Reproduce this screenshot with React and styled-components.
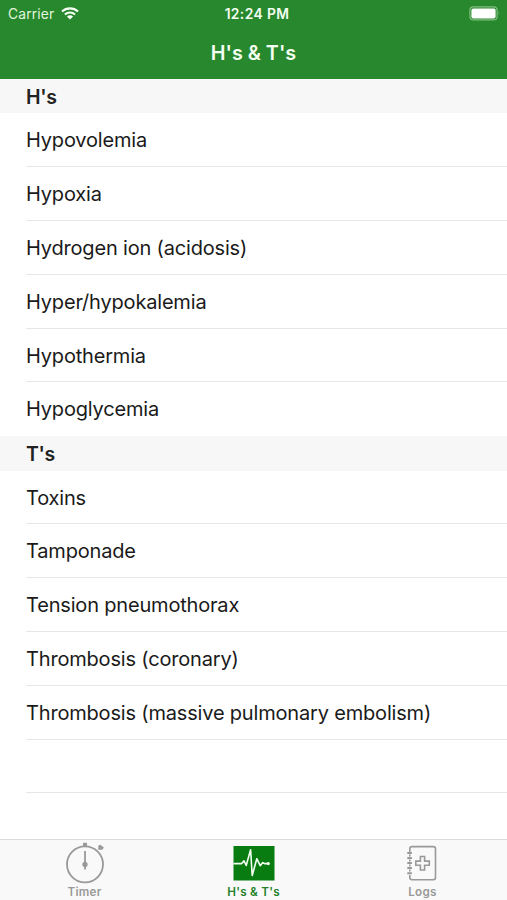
import React from "react";
import styled, { createGlobalStyle } from "styled-components";

const GlobalStyle = createGlobalStyle`
  * {
    box-sizing: border-box;
  }
  body {
    margin: 0;
    background: #fff;
    font-family: Inter, "Liberation Sans", sans-serif;
  }
`;

const Screen = styled.div`
  display: flex;
  flex-direction: column;
  width: 507px;
  height: 900px;
  overflow: hidden;
  background: #fff;
`;

const Header = styled.header`
  flex: none;
  height: 79px;
  background: #28882d;
  color: #f4fff2;
`;

const StatusBar = styled.div`
  display: grid;
  grid-template-columns: 1fr auto 1fr;
  align-items: center;
  height: 27px;
  padding: 0 6px 0 8px;
`;

const Carrier = styled.div`
  display: flex;
  align-items: center;
  gap: 7px;
  font-size: 13.8px;
  letter-spacing: 0.15px;
  color: #e0f6dd;
`;

const Clock = styled.div`
  margin-left: 5px;
  font-size: 13.8px;
  font-weight: 600;
  letter-spacing: 0.4px;
`;

const Battery = styled.svg`
  justify-self: end;
`;

const Title = styled.h1`
  margin: 0;
  height: 52px;
  line-height: 52px;
  text-align: center;
  font-size: 19.8px;
  font-weight: 600;
`;

const List = styled.main`
  flex: 1;
  min-height: 0;
  overflow: hidden;
`;

const SectionTitle = styled.h2`
  margin: 0;
  height: 34.4px;
  padding-left: 26px;
  background: #f7f7f7;
  color: #222;
  font-size: 19.5px;
  font-weight: 600;
  letter-spacing: -0.3px;
  line-height: 37px;
`;

const Row = styled.div`
  height: 53.8px;
  margin-left: 26px;
  border-bottom: 1px solid ${(props) => (props.$last ? "transparent" : "#e6e6e6")};
  color: #1a1a1a;
  font-size: 20px;
  letter-spacing: -0.18px;
  line-height: 55px;
  white-space: nowrap;
`;

const TabBar = styled.nav`
  flex: none;
  display: grid;
  grid-template-columns: repeat(3, 1fr);
  height: 61px;
  border-top: 1px solid #dcdcdc;
  background: #f9f9f9;
`;

const Tab = styled.div`
  display: flex;
  flex-direction: column;
  align-items: center;
  padding-top: 1px;
  color: ${(props) => (props.$active ? "#23812a" : "#999")};
  font-size: 11.7px;
  font-weight: 600;
  letter-spacing: 0.25px;
  line-height: 14px;

  & svg {
    display: block;
  }
`;

function WifiIcon() {
  return (
    <svg width="18" height="13" viewBox="0 0 18 13">
      <g fill="none" stroke="#f8fff6" strokeWidth="2.1">
        <path d="M1 4.5 C5.5 .3 12.5 .3 17 4.5" />
        <path d="M3.9 7.5 C6.8 4.8 11.2 4.8 14.1 7.5" />
      </g>
      <path d="M5.9 9.5 C7.7 7.9 10.3 7.9 12.1 9.5 L9 12.6 Z" fill="#f8fff6" />
    </svg>
  );
}

function BatteryIcon() {
  return (
    <Battery width="32" height="15" viewBox="0 0 32 15">
      <rect x="0.9" y="0.9" width="27.2" height="13" rx="3.5" fill="none" stroke="#80bd80" strokeWidth="1.2" />
      <rect x="2.4" y="2.4" width="24.2" height="10" rx="2" fill="#fff" />
      <path d="M29.7 5.3 Q31.5 7.4 29.7 9.5 Z" fill="#80bd80" />
    </Battery>
  );
}

function TimerIcon() {
  return (
    <svg width="44" height="44" viewBox="0 0 44 44">
      <g fill="none" stroke="#999" strokeWidth="1.8">
        <circle cx="22" cy="23.3" r="18" />
        <path d="M22 10 V28.5" />
      </g>
      <g fill="#999">
        <rect x="20" y="1.8" width="4" height="4" />
        <circle cx="22" cy="23.4" r="2.6" />
        <path d="M35.4 4.4 L37.3 3.7 L40.8 6.4 L39.4 8.8 L35.2 8.8 Z" />
      </g>
    </svg>
  );
}

function PulseIcon() {
  return (
    <svg width="44" height="44" viewBox="0 0 44 44">
      <rect x="1.5" y="5" width="41" height="34.5" fill="#087c10" />
      <path
        d="M1.5 22.6 H9.7 L12 19.8 L14.2 24.5 L18.6 8.7 L20.2 34.5 L24.8 17.7 L28.2 24.7 L30.8 21.6 L32.5 22.6 H36"
        fill="none"
        stroke="#f4fff4"
        strokeWidth="1.6"
        strokeLinejoin="round"
      />
      <circle cx="36.3" cy="22.6" r="1.6" fill="#f4fff4" />
    </svg>
  );
}

function LogsIcon() {
  return (
    <svg width="44" height="44" viewBox="0.7 0 44 44">
      <g fill="none" stroke="#999" strokeWidth="1.6">
        <path d="M9.5 11 V7.8 Q9.5 5.6 11.7 5.6 H33 Q35.2 5.6 35.2 7.8 V36.5 Q35.2 38.7 33 38.7 H11.7 Q9.5 38.7 9.5 36.5 V34" />
        <path d="M9.5 13.5 V15.5 M9.5 18.5 V20.5 M9.5 23.5 V25.5 M9.5 28.5 V30.5" />
        <path d="M7 12 H11.6 M7 17 H11.6 M7 22 H11.6 M7 27 H11.6 M7 32.3 H11.6" strokeWidth="1.9" />
        <path d="M20.1 15.5 H24.3 V20.1 H29 V24.3 H24.3 V29 H20.1 V24.3 H15.5 V20.1 H20.1 Z" />
      </g>
    </svg>
  );
}

const sections = [
  {
    title: "H's",
    rows: [
      "Hypovolemia",
      "Hypoxia",
      "Hydrogen ion (acidosis)",
      "Hyper/hypokalemia",
      "Hypothermia",
      "Hypoglycemia",
    ],
  },
  {
    title: "T's",
    rows: [
      "Toxins",
      "Tamponade",
      "Tension pneumothorax",
      "Thrombosis (coronary)",
      "Thrombosis (massive pulmonary embolism)",
      "",
      "",
    ],
  },
];

function App() {
  return (
    <Screen>
      <GlobalStyle />
      <Header>
        <StatusBar>
          <Carrier>
            Carrier
            <WifiIcon />
          </Carrier>
          <Clock>12:24 PM</Clock>
          <BatteryIcon />
        </StatusBar>
        <Title>H's &amp; T's</Title>
      </Header>

      <List>
        {sections.map((section) => (
          <section key={section.title}>
            <SectionTitle>{section.title}</SectionTitle>
            {section.rows.map((row, i) => (
              <Row key={i} $last={i === section.rows.length - 1}>
                {row}
              </Row>
            ))}
          </section>
        ))}
      </List>

      <TabBar>
        <Tab>
          <TimerIcon />
          Timer
        </Tab>
        <Tab $active>
          <PulseIcon />
          H's &amp; T's
        </Tab>
        <Tab>
          <LogsIcon />
          Logs
        </Tab>
      </TabBar>
    </Screen>
  );
}

export default App;
